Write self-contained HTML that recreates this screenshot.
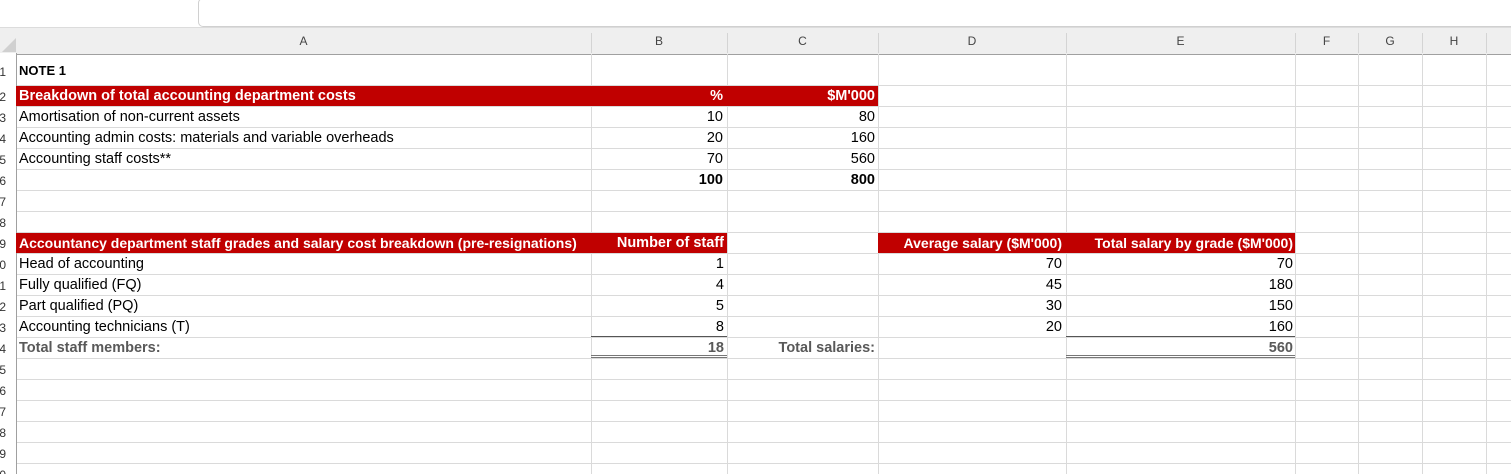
<!DOCTYPE html>
<html style="overflow:hidden;height:474px"><head><meta charset="utf-8"><style>
body{margin:0;width:1511px;height:474px;overflow:hidden;background:#fff;font-family:"Liberation Sans",Arial,sans-serif;font-size:14.5px;position:relative}
.a{position:absolute}
.t{position:absolute;white-space:nowrap;line-height:21px;color:#000}
.r{text-align:right}
.b{font-weight:bold}
.g{color:#595959;font-weight:bold}
</style></head><body>
<div class="a" style="left:198px;top:-2px;width:1320px;height:27px;border:1px solid #d0d0d0;border-radius:5px;background:#fff"></div>
<div class="a" style="left:0;top:27px;width:1511px;height:26px;background:#efefef;border-bottom:1px solid #a0a0a0;border-top:1px solid #dcdcdc"></div>
<div class="a" style="left:0;top:27px;width:0;height:0;border-left:14px solid transparent;border-bottom:14px solid #d0d0d0;margin-top:11px;margin-left:2px"></div>
<div class="a" style="left:0;top:53px;width:16px;height:421px;background:#fff;border-right:1px solid #a0a0a0"></div>
<div id="g"></div>
<script>
var gg=document.getElementById('g'),h='';
var cols=[16,591,727,878,1066,1295,1358,1422,1486],names='ABCDEFGH';
for(var i=0;i<8;i++){h+='<div class="t" style="left:'+cols[i]+'px;top:31px;width:'+(cols[i+1]-cols[i])+'px;text-align:center;color:#444;font-size:12px">'+names[i]+'</div>';}
for(var i=1;i<cols.length;i++){h+='<div class="a" style="left:'+cols[i]+'px;top:33px;width:1px;height:20px;background:#d4d4d4"></div><div class="a" style="left:'+cols[i]+'px;top:54px;width:1px;height:420px;background:#dadada"></div>';}
for(var r=1;r<=20;r++){var tp=r==1?53:86+21*(r-2);var bt=86+21*(r-1);
if(bt<474)h+='<div class="a" style="left:17px;top:'+(bt-1)+'px;width:1494px;height:1px;background:#dadada"></div>';
h+='<div class="t" style="left:-10px;top:'+(tp+(r==1?9:1))+'px;width:16px;text-align:right;color:#333;font-size:12px">'+r+'</div>';}
gg.innerHTML=h;
</script>
<div class="a" style="left:16px;top:86px;width:862px;height:20px;background:#c00000"></div>
<div class="a" style="left:16px;top:233px;width:711px;height:20px;background:#c00000"></div>
<div class="a" style="left:878px;top:233px;width:417px;height:20px;background:#c00000"></div>
<div class="a" style="left:591px;top:336px;width:136px;height:1px;background:#555"></div>
<div class="a" style="left:1066px;top:336px;width:229px;height:1px;background:#555"></div>
<div class="a" style="left:591px;top:355px;width:136px;height:3px;border-top:1px solid #777;border-bottom:1px solid #777;box-sizing:border-box"></div>
<div class="a" style="left:1066px;top:355px;width:229px;height:3px;border-top:1px solid #777;border-bottom:1px solid #777;box-sizing:border-box"></div>

<div class="t b" style="left:19px;top:60px;font-size:13px">NOTE 1</div>
<div class="t" style="left:19px;top:86px;color:#fff;font-weight:bold">Breakdown of total accounting department costs</div>
<div class="t r" style="left:591px;top:86px;width:132px;color:#fff;font-weight:bold">%</div>
<div class="t r" style="left:727px;top:86px;width:148px;color:#fff;font-weight:bold">$M'000</div>
<div class="t" style="left:19px;top:107px">Amortisation of non-current assets</div>
<div class="t" style="left:19px;top:128px">Accounting admin costs: materials and variable overheads</div>
<div class="t" style="left:19px;top:149px">Accounting staff costs**</div>
<div class="t r" style="left:591px;top:107px;width:132px">10</div>
<div class="t r" style="left:591px;top:128px;width:132px">20</div>
<div class="t r" style="left:591px;top:149px;width:132px">70</div>
<div class="t r b" style="left:591px;top:170px;width:132px">100</div>
<div class="t r" style="left:727px;top:107px;width:148px">80</div>
<div class="t r" style="left:727px;top:128px;width:148px">160</div>
<div class="t r" style="left:727px;top:149px;width:148px">560</div>
<div class="t r b" style="left:727px;top:170px;width:148px">800</div>

<div class="t" style="left:19px;top:233px;color:#fff;font-weight:bold;font-size:14px">Accountancy department staff grades and salary cost breakdown (pre-resignations)</div>
<div class="t r" style="left:591px;top:233px;width:133px;color:#fff;font-weight:bold">Number of staff</div>
<div class="t r" style="left:878px;top:233px;width:184px;color:#fff;font-weight:bold;font-size:14px">Average salary ($M'000)</div>
<div class="t r" style="left:1066px;top:233px;width:227px;color:#fff;font-weight:bold;font-size:14px">Total salary by grade ($M'000)</div>
<div class="t" style="left:19px;top:254px">Head of accounting</div>
<div class="t" style="left:19px;top:275px">Fully qualified (FQ)</div>
<div class="t" style="left:19px;top:296px">Part qualified (PQ)</div>
<div class="t" style="left:19px;top:317px">Accounting technicians (T)</div>
<div class="t g" style="left:19px;top:338px">Total staff members:</div>
<div class="t r" style="left:591px;top:254px;width:133px">1</div>
<div class="t r" style="left:591px;top:275px;width:133px">4</div>
<div class="t r" style="left:591px;top:296px;width:133px">5</div>
<div class="t r" style="left:591px;top:317px;width:133px">8</div>
<div class="t r g" style="left:591px;top:338px;width:133px">18</div>
<div class="t r g" style="left:727px;top:338px;width:148px">Total salaries:</div>
<div class="t r" style="left:878px;top:254px;width:184px">70</div>
<div class="t r" style="left:878px;top:275px;width:184px">45</div>
<div class="t r" style="left:878px;top:296px;width:184px">30</div>
<div class="t r" style="left:878px;top:317px;width:184px">20</div>
<div class="t r" style="left:1066px;top:254px;width:227px">70</div>
<div class="t r" style="left:1066px;top:275px;width:227px">180</div>
<div class="t r" style="left:1066px;top:296px;width:227px">150</div>
<div class="t r" style="left:1066px;top:317px;width:227px">160</div>
<div class="t r g" style="left:1066px;top:338px;width:227px">560</div>
</body></html>
